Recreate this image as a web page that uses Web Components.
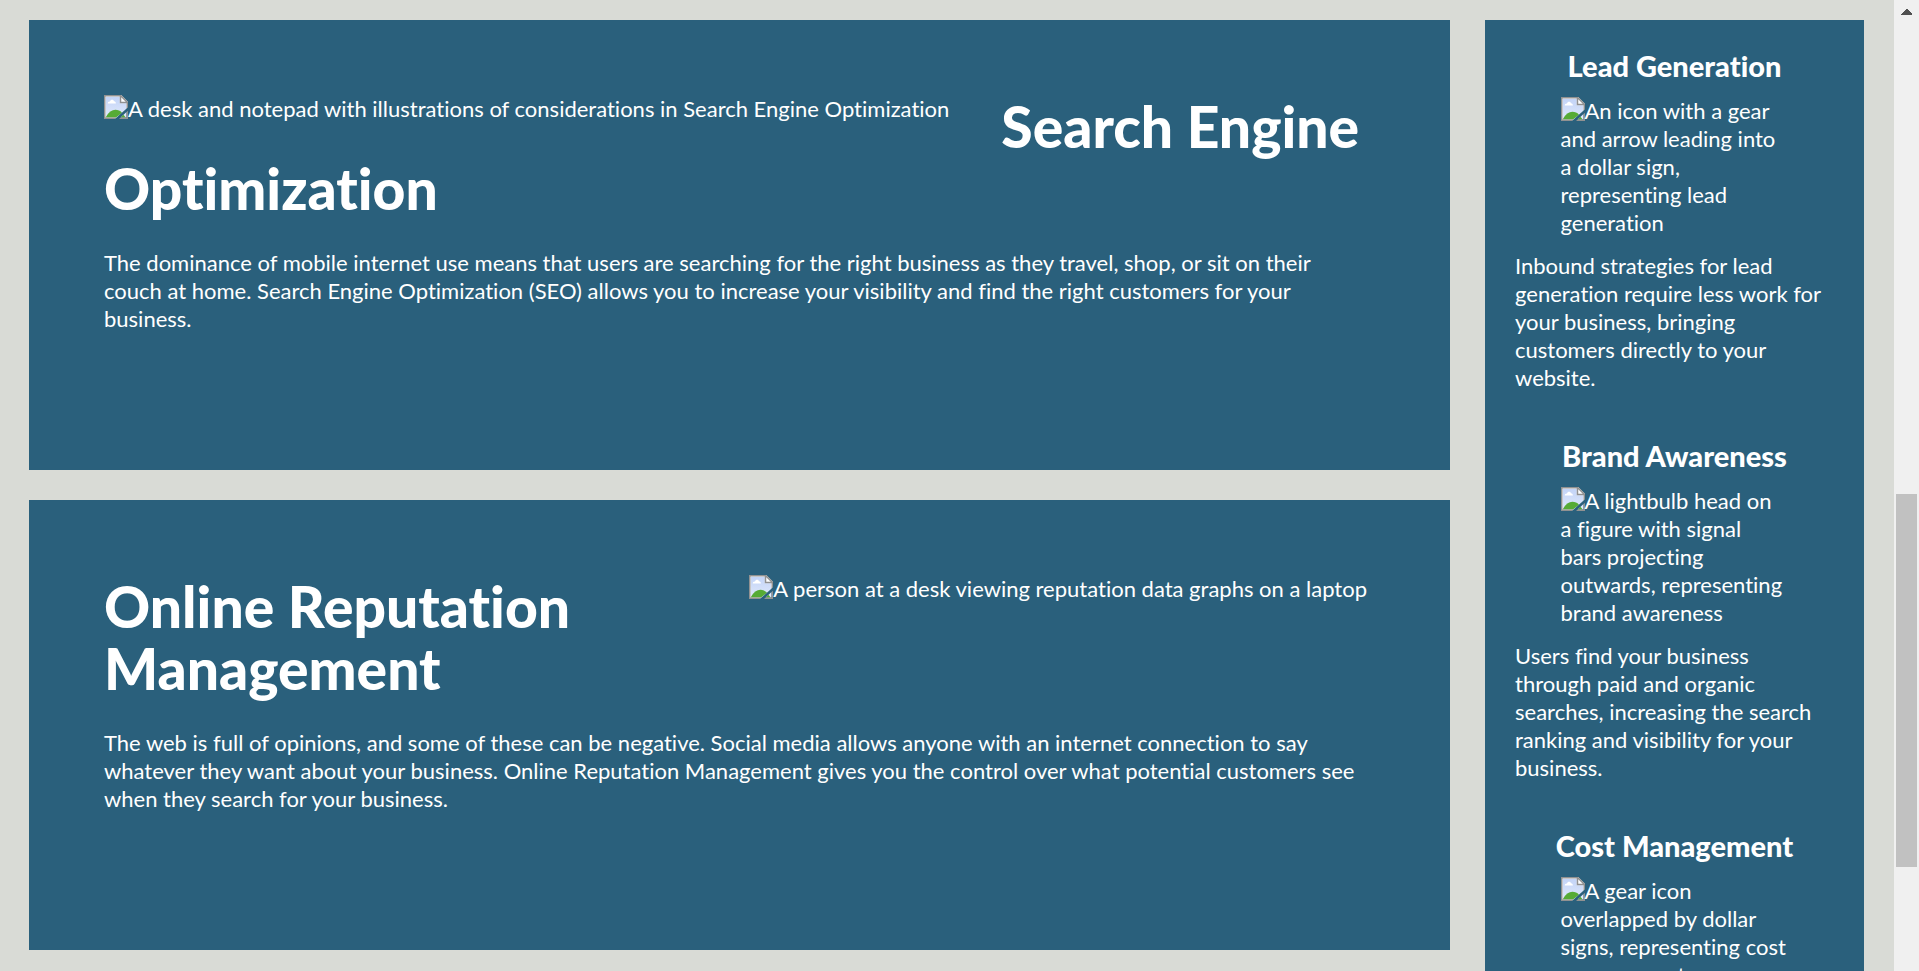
<!DOCTYPE html>
<html lang="en">
<head>
<meta charset="utf-8">
<meta name="viewport" content="width=device-width, initial-scale=1">
<title>Online Marketing Services</title>
<style>
  html, body { height: 100%; }
  body {
    margin: 0;
    overflow: hidden;
    background: #d9dbd6;
    color: #fff;
    font: 22px/28px Lato, "Liberation Sans", sans-serif;
    font-variant-ligatures: none;
  }
</style>
</head>
<body>
<marketing-page>
  <service-card heading="Search Engine Optimization">
    <missing-picture slot="picture">A desk and notepad with illustrations of considerations in Search Engine Optimization</missing-picture>
    The dominance of mobile internet use means that users are searching for the right business as they travel, shop, or sit on their<br>
    couch at home. Search Engine Optimization (SEO) allows you to increase your visibility and find the right customers for your<br>
    business.
  </service-card>
  <service-card heading="Online Reputation Management" picture-side="right">
    <missing-picture slot="picture">A person at a desk viewing reputation data graphs on a laptop</missing-picture>
    The web is full of opinions, and some of these can be negative. Social media allows anyone with an internet connection to say
    whatever they want about your business. Online Reputation Management gives you the control over what potential customers see
    when they search for your business.
  </service-card>

  <benefit-item slot="benefits" heading="Lead Generation">
    <missing-picture slot="picture">An icon with a gear and arrow leading into a dollar sign, representing lead generation</missing-picture>
    Inbound strategies for lead generation require less work for your business, bringing customers directly to your website.
  </benefit-item>
  <benefit-item slot="benefits" heading="Brand Awareness">
    <missing-picture slot="picture">A lightbulb head on<br>a figure with signal<br>bars projecting outwards, representing brand awareness</missing-picture>
    Users find your business<br>through paid and organic<br>searches, increasing the search ranking and visibility for your business.
  </benefit-item>
  <benefit-item slot="benefits" heading="Cost Management">
    <missing-picture slot="picture">A gear icon<br>overlapped by dollar signs, representing cost management</missing-picture>
  </benefit-item>
</marketing-page>

<script>
  const define = (name, html, setup) => {
    const template = document.createElement('template');
    template.innerHTML = html;
    customElements.define(name, class extends HTMLElement {
      constructor() {
        super();
        this.attachShadow({ mode: 'open' }).append(template.content.cloneNode(true));
      }
      connectedCallback() { if (setup) setup(this, this.shadowRoot); }
    });
  };
  const setHeading = (host, root) => {
    const words = host.getAttribute('heading').split(' ').map((word, i) => {
      const span = document.createElement('span');
      span.textContent = word;
      return i ? [' ', span] : [span];
    });
    root.querySelector('h1, h3').replaceChildren(...words.flat());
  };

  /* Page frame: article column, benefits column, scroll track */
  define('marketing-page', `
    <style>
      :host { display: flex; height: 100%; overflow: hidden; }
      .content {
        flex: 1;
        min-width: 0;
        display: grid;
        grid-template-columns: minmax(0, 1421fr) minmax(0, 379fr);
        column-gap: 35px;
        align-items: start;
        padding: 20px 30px 0 29px;
        overflow: hidden;
      }
      main { display: grid; gap: 30px; }
      aside {
        box-sizing: border-box;
        min-height: 100%;
        display: grid;
        gap: 48px;
        padding: 30px;
        background: #2a607c;
      }
    </style>
    <div class="content">
      <main><slot></slot></main>
      <aside><slot name="benefits"></slot></aside>
    </div>
    <scroll-track></scroll-track>`);

  /* Large card with a floated picture */
  define('service-card', `
    <style>
      :host {
        display: block;
        box-sizing: border-box;
        min-height: 450px;
        padding: 75px;
        background: #2a607c;
      }
      h1 { margin: 0 0 30px; font-size: 57px; line-height: 62px; font-weight: 900; }
      p { margin: 0; }
      ::slotted([slot="picture"]) { float: left; margin-right: 52px; }
      :host([picture-side="right"]) ::slotted([slot="picture"]) { float: right; margin: 0 8px 0 52px; }
    </style>
    <slot name="picture"></slot>
    <h1></h1>
    <p><slot></slot></p>`, setHeading);

  /* Narrow sidebar entry */
  define('benefit-item', `
    <style>
      :host { display: grid; gap: 15px; }
      h3 { margin: 0; font-size: 29px; line-height: 32px; font-weight: 900; text-align: center; }
      p { margin: 0; }
      ::slotted([slot="picture"]) { width: 228px; max-width: 100%; justify-self: center; }
    </style>
    <h3></h3>
    <slot name="picture"></slot>
    <p><slot></slot></p>`, setHeading);

  /* Placeholder for a picture that did not load, with its description */
  define('missing-picture', `
    <style>
      :host { display: block; }
      svg { width: 24px; height: 24px; vertical-align: top; }
    </style>
    <svg viewBox="0 0 16 16" aria-hidden="true">
      <defs>
        <linearGradient id="sky" x1="0" y1="0" x2="0" y2="1">
          <stop offset="0" stop-color="#c3d4f7"/><stop offset="1" stop-color="#dfe8fb"/>
        </linearGradient>
      </defs>
      <path fill="#fff" d="M0 0H11.500L16 4.500V8.300L8 16H0z"/>
      <path fill="url(#sky)" d="M1.300 1.300H10.500V5.500H14.700V9.500L8.800 14.700H1.300z"/>
      <path fill="#fff" d="M2.500 5.700C2.400 4.700 3.200 4.200 4 4.300C4.300 2.900 6.300 2.900 6.600 4.100C7.400 4 8 4.700 7.900 5.700z"/>
      <path fill="#56ab35" d="M1.300 14.700C3 11.500 5.300 9.900 7.600 9.900C9.300 9.900 10.800 10.500 12 11.800L8 15H1.300z"/>
      <path fill="#919191" d="M0 0H11.500L16 4.500V8.300L15 9.200V5.500H10.500V1H1V15H8.500L7.400 16H0zM11.500 1.500V4.500H14.500z"/>
      <path fill="#2a607c" d="M16 8.200V10.500L10 16H7.300z"/>
      <path fill="#dfe8fb" d="M15 11.400V15H11.100z"/>
      <path fill="#56ab35" d="M13 13.200L14.500 15H11.100z"/>
      <path fill="#919191" d="M16 10.500V16H10L11.100 15H15V11.400z"/>
    </svg><slot></slot>`);

  /* Vertical scroll track with its arrow and thumb */
  define('scroll-track', `
    <style>
      :host {
        flex: none;
        box-sizing: border-box;
        width: 25px;
        display: grid;
        grid-template-rows: 25px 469fr 373fr 104fr;
        padding: 0 2px;
        background: #f0f0f0;
      }
      svg { width: 11px; height: 6px; margin: 9px 5px; }
      .thumb { grid-row: 3; background: #c1c1c1; }
    </style>
    <svg viewBox="0 0 11 6" aria-hidden="true" shape-rendering="crispEdges"><path fill="#505050" d="M5 0h1l5 5v1H0V5z"/></svg>
    <div class="thumb"></div>`);
</script>
</body>
</html>
